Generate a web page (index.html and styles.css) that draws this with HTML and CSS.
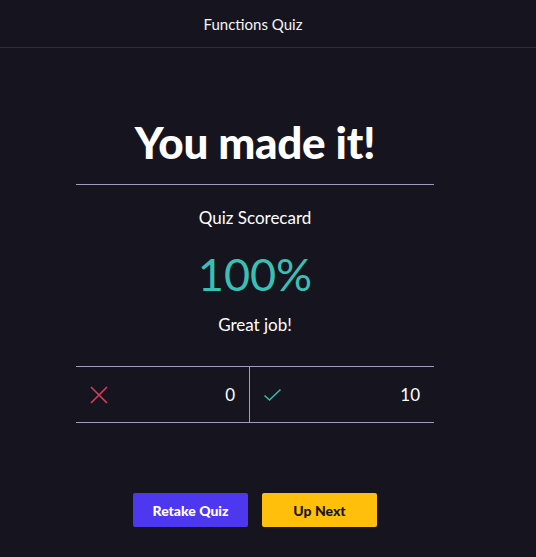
FILE: index.html
```html
<!DOCTYPE html>
<html>
<head>
<meta charset="utf-8">
<link rel="stylesheet" href="styles.css">
</head>
<body>
<header class="topbar"><span class="topbar-title">Functions Quiz</span></header>
<main class="page">
  <section class="card">
    <h1 class="headline">You made it!</h1>
    <div class="summary">
      <p class="summary-label">Quiz Scorecard</p>
      <p class="score">100%</p>
      <p class="praise">Great job!</p>
    </div>
    <div class="tally">
      <div class="tally-cell">
        <svg class="icon" width="20" height="20" viewBox="0 0 20 20"><path d="M2 2 L18 18 M18 2 L2 18" stroke="#d8405a" stroke-width="1.6" fill="none"/></svg>
        <span class="tally-num">0</span>
      </div>
      <div class="tally-cell">
        <svg class="icon" width="20" height="20" viewBox="0 0 20 20"><path d="M1.5 10.5 L6.5 15 L17.5 4.5" stroke="#3bb5aa" stroke-width="1.6" fill="none"/></svg>
        <span class="tally-num">10</span>
      </div>
    </div>
    <div class="actions">
      <button class="btn btn-primary">Retake Quiz</button>
      <button class="btn btn-accent">Up Next</button>
    </div>
  </section>
</main>
</body>
</html>
```

FILE: styles.css
```css
html, body {
  margin: 0;
  padding: 0;
  background: #16151f;
  color: #ffffff;
  font-family: "Lato", "Noto Sans", sans-serif;
}
.topbar {
  height: 48px;
  border-bottom: 1px solid #2e2d38;
  display: flex;
  align-items: center;
  justify-content: center;
  padding-right: 30px;
  box-sizing: border-box;
}
.topbar-title {
  font-size: 15px;
  color: #f4f4f6;
}
.page {
  display: flex;
  justify-content: flex-start;
  padding-left: 76px;
}
.card {
  width: 358px;
  display: flex;
  flex-direction: column;
  align-items: stretch;
}
.headline {
  margin: 61px 0 0;
  font-size: 44px;
  font-weight: 900;
  text-align: center;
  line-height: 66px;
  letter-spacing: -0.3px;
  border-bottom: 1px solid #a09cbf;
  padding-bottom: 9px;
}
.summary {
  text-align: center;
}
.summary p { margin: 0; }
.summary-label {
  margin-top: 21px !important;
  font-size: 17px;
  line-height: 24px;
}
.score {
  font-size: 45px;
  line-height: 56px;
  color: #3cbfb3;
  margin-top: 16px !important;
}
.praise {
  font-size: 17px;
  line-height: 24px;
  margin-top: 11px !important;
}
.tally {
  margin-top: 29px;
  display: grid;
  grid-template-columns: 173px 1fr;
  border-top: 1px solid #a09cbf;
  border-bottom: 1px solid #a09cbf;
  height: 57px;
  box-sizing: border-box;
}
.tally-cell {
  display: flex;
  align-items: center;
  justify-content: space-between;
  padding: 0 14px 0 13px;
}
.tally-cell + .tally-cell {
  border-left: 1px solid #a09cbf;
}
.tally-num {
  font-size: 17px;
}
.icon { display: block; }
.actions {
  margin-top: 70px;
  display: flex;
  justify-content: center;
  gap: 14px;
}
.btn {
  width: 115px;
  height: 34px;
  border: none;
  border-radius: 2px;
  font-family: "Lato", "Noto Sans", sans-serif;
  font-weight: 900;
  font-size: 14px;
}
.btn-primary {
  background: #4d38ef;
  color: #ffffff;
}
.btn-accent {
  background: #ffbf0b;
  color: #16151f;
}
```
